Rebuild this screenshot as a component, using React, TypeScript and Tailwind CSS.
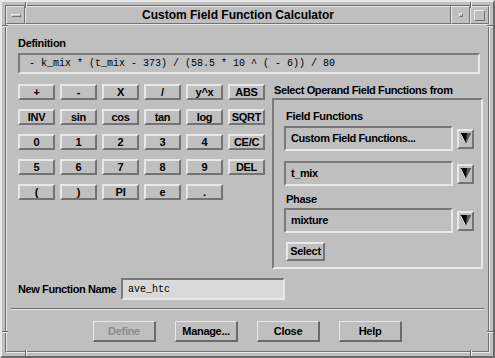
import React from "react";

const sans = { fontFamily: '"Liberation Sans", Arial, sans-serif' };

const raised =
  "border-2 border-t-[#e8e8e8] border-l-[#e8e8e8] border-b-[#737373] border-r-[#737373]";
const thin =
  "border border-t-[#e8e8e8] border-l-[#e8e8e8] border-b-[#737373] border-r-[#737373]";
const sunken =
  "border-2 border-t-[#7a7a7a] border-l-[#7a7a7a] border-b-[#e8e8e8] border-r-[#e8e8e8]";

const keys = [
  ["+", "-", "X", "/", "y^x", "ABS"],
  ["INV", "sin", "cos", "tan", "log", "SQRT"],
  ["0", "1", "2", "3", "4", "CE/C"],
  ["5", "6", "7", "8", "9", "DEL"],
  ["(", ")", "PI", "e", "."],
];

const Arrow = () => (
  <div className={`w-[17px] h-[20px] ${raised} flex items-center justify-center bg-[#bfbfbf]`}>
    <svg width="11" height="13" viewBox="0 0 11 13">
      <polygon points="0,1 11,1 5.5,12" fill="#000" />
      <polygon points="7,1 11,1 5.5,12 6.5,6" fill="#5a5a5a" />
      <line x1="0.5" y1="1.5" x2="5.5" y2="11.5" stroke="#e8e8e8" strokeWidth="1" />
    </svg>
  </div>
);

const Dropdown = ({ value }: { value: string }) => (
  <div className="flex items-center gap-[4px]">
    <div className={`w-[169px] h-[25px] ${sunken} flex items-center pl-[5px] text-[11px] font-bold tracking-[-0.4px] text-black`}>
      {value}
    </div>
    <Arrow />
  </div>
);

const Notch = ({ className }: { className: string }) => (
  <div className={`absolute ${className}`} />
);

export default function App() {
  return (
    <div
      style={sans}
      className="relative w-[495px] h-[358px] bg-[#bfbfbf] border-2 border-t-[#e8e8e8] border-l-[#e8e8e8] border-b-[#6a6a6a] border-r-[#6a6a6a] p-[3px] text-black"
    >
      {/* window frame corner notches */}
      <Notch className="left-[23px] top-0 w-[2px] h-[6px] bg-[#6a6a6a] border-r border-[#e8e8e8]" />
      <Notch className="left-[468px] top-0 w-[2px] h-[6px] bg-[#6a6a6a] border-r border-[#e8e8e8]" />
      <Notch className="left-[23px] bottom-0 w-[2px] h-[6px] bg-[#6a6a6a] border-r border-[#e8e8e8]" />
      <Notch className="left-[468px] bottom-0 w-[2px] h-[6px] bg-[#6a6a6a] border-r border-[#e8e8e8]" />
      <Notch className="left-0 top-[23px] w-[6px] h-[2px] bg-[#6a6a6a] border-b border-[#e8e8e8]" />
      <Notch className="right-0 top-[23px] w-[6px] h-[2px] bg-[#6a6a6a] border-b border-[#e8e8e8]" />
      <Notch className="left-0 bottom-[23px] w-[6px] h-[2px] bg-[#6a6a6a] border-b border-[#e8e8e8]" />
      <Notch className="right-0 bottom-[23px] w-[6px] h-[2px] bg-[#6a6a6a] border-b border-[#e8e8e8]" />

      <div className="w-full h-full flex flex-col border border-t-[#6a6a6a] border-l-[#6a6a6a] border-b-[#e8e8e8] border-r-[#e8e8e8]">
        {/* title bar */}
        <div className="flex h-[18px] shrink-0">
          <div className={`w-[19px] ${thin} flex items-center justify-center`}>
            <div className="w-[10px] h-[3px] border border-t-[#e8e8e8] border-l-[#e8e8e8] border-b-[#737373] border-r-[#737373]" />
          </div>
          <div className={`flex-1 ${thin} flex items-center justify-center text-[12px] font-bold leading-none`}>
            Custom Field Function Calculator
          </div>
          <div className={`w-[19px] ${thin} flex items-center justify-center`}>
            <div className="w-[4px] h-[4px] border border-t-[#e8e8e8] border-l-[#e8e8e8] border-b-[#737373] border-r-[#737373]" />
          </div>
          <div className={`w-[19px] ${thin} flex items-center justify-center`}>
            <div className="w-[11px] h-[11px] border border-t-[#e8e8e8] border-l-[#e8e8e8] border-b-[#737373] border-r-[#737373]" />
          </div>
        </div>

        {/* client area */}
        <div className={`flex-1 ${thin} flex flex-col pt-[12px]`}>
          <div className="pl-[11px] pr-[8px]">
            <div className="h-[13px] leading-[13px] text-[11px] font-bold tracking-[-0.3px]">Definition</div>
            <div className={`mt-[3px] h-[21px] ${sunken} flex items-center pl-[9px] text-[10px] leading-none`} style={{ fontFamily: '"Liberation Mono", monospace' }}>
              - k_mix * (t_mix - 373) / (58.5 * 10 ^ ( - 6)) / 80
            </div>
          </div>

          <div className="mt-[10px] pl-[11px] flex items-start">
            <div className="grid grid-cols-[repeat(6,37px)] auto-rows-[16px] gap-x-[5px] gap-y-[9px]">
              {keys.flat().map((k) => (
                <div key={k} className={`${raised} flex items-center justify-center text-[11px] font-bold tracking-[-0.3px] leading-none`}>
                  {k}
                </div>
              ))}
            </div>

            <div className="ml-[7px] w-[211px]">
              <div className="h-[14px] leading-[13px] pl-[2px] text-[11px] font-bold tracking-[-0.4px]">
                Select Operand Field Functions from
              </div>
              <div className="h-[171px] border-2 border-t-[#7a7a7a] border-l-[#7a7a7a] border-b-[#e8e8e8] border-r-[#e8e8e8] pl-[10px] pt-[10px]">
                <div className="h-[13px] leading-[13px] pl-[2px] text-[11px] font-bold tracking-[-0.3px]">Field Functions</div>
                <div className="mt-[3px]"><Dropdown value="Custom Field Functions..." /></div>
                <div className="mt-[10px]"><Dropdown value="t_mix" /></div>
                <div className="mt-[7px] h-[13px] leading-[13px] pl-[2px] text-[11px] font-bold tracking-[-0.3px]">Phase</div>
                <div className="mt-[2px]"><Dropdown value="mixture" /></div>
                <div className={`mt-[9px] ml-[2px] w-[39px] h-[19px] ${raised} flex items-center justify-center text-[11px] font-bold tracking-[-0.3px]`}>
                  Select
                </div>
              </div>
            </div>
          </div>

          <div className="mt-[9px] pl-[11px] flex items-center gap-[5px]">
            <div className="w-[98px] text-[11px] font-bold tracking-[-0.4px] whitespace-nowrap">New Function Name</div>
            <div className={`w-[164px] h-[22px] ${sunken} bg-[#d9d9d9] flex items-center pl-[5px] text-[10px]`} style={{ fontFamily: '"Liberation Mono", monospace' }}>
              ave_htc
            </div>
          </div>

          <div className="mt-[8px] mx-[4px] h-[2px] border-t border-t-[#6a6a6a] border-b border-b-[#e8e8e8]" />

          <div className="mt-[11px] flex justify-center gap-[19px]">
            {["Define", "Manage...", "Close", "Help"].map((b) => (
              <div
                key={b}
                className={`w-[63px] h-[21px] border-t border-l border-t-[#e8e8e8] border-l-[#e8e8e8] border-b-2 border-r-2 border-b-[#6a6a6a] border-r-[#6a6a6a] flex items-center justify-center text-[11px] font-bold tracking-[-0.3px] ${b === "Define" ? "text-[#8c8c8c]" : "text-black"}`}
              >
                {b}
              </div>
            ))}
          </div>
        </div>
      </div>
    </div>
  );
}
